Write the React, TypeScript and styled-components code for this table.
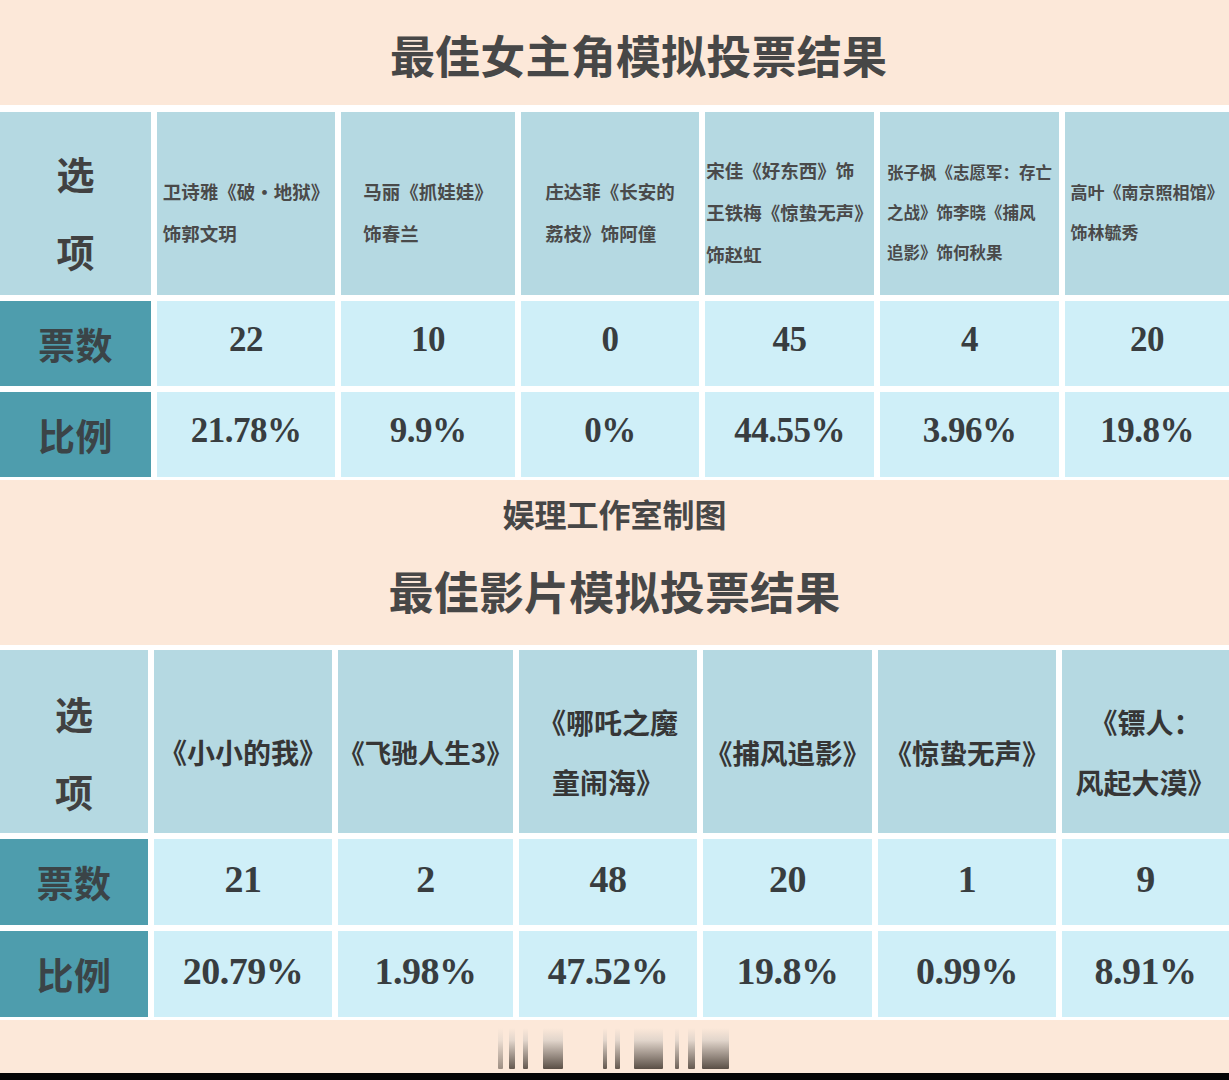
import React from 'react';
import styled, { createGlobalStyle } from 'styled-components';

const GlobalStyle = createGlobalStyle`
  html, body {
    margin: 0;
    padding: 0;
    background: #fce8d9;
  }
  body {
    font-family: "Noto Sans CJK SC", "Noto Sans", sans-serif;
  }
`;

const Page = styled.div`
  width: 1229px;
  height: 1080px;
  overflow: hidden;
  display: flex;
  flex-direction: column;
  background: #fce8d9;
  color: #444;
`;

const Title = styled.h1<{ $top: number; $bottom: number; $shift: number }>`
  margin: 0;
  padding: ${({ $top, $bottom, $shift }) => `${$top}px 0 ${$bottom}px ${$shift}px`};
  height: 90px;
  line-height: 90px;
  font-size: 45px;
  font-weight: 700;
  text-align: center;
  color: #474747;
  letter-spacing: 0.2px;
`;

const Credit = styled.div`
  height: 66px;
  line-height: 66px;
  font-size: 32px;
  font-weight: 700;
  text-align: center;
  color: #474747;
`;

const Table = styled.div<{ $cols: string; $rows: string; $top: number }>`
  display: grid;
  grid-template-columns: ${({ $cols }) => $cols};
  grid-template-rows: ${({ $rows }) => $rows};
  gap: 6px;
  padding: ${({ $top }) => $top}px 0 3px;
  background: #fff;
`;

const HeadCell = styled.div<{ $pad: number }>`
  background: #b5d9e2;
  display: flex;
  align-items: center;
  justify-content: center;
  padding-top: ${({ $pad }) => $pad}px;
  box-sizing: border-box;
  min-width: 0;
`;

const OptionLabel = styled.div`
  font-size: 38px;
  font-weight: 700;
  line-height: 78px;
  color: #414141;
  text-align: center;
`;

const HeadText = styled.div<{ $size: number; $lh: number; $center?: boolean }>`
  font-size: ${({ $size }) => $size}px;
  line-height: ${({ $lh }) => $lh}px;
  font-weight: 700;
  color: ${({ $center }) => ($center ? '#363636' : '#4a4a4a')};
  text-align: ${({ $center }) => ($center ? 'center' : 'left')};
  white-space: nowrap;
`;

const LabelCell = styled.div`
  background: #4e9dad;
  display: flex;
  align-items: center;
  justify-content: center;
  font-size: 37px;
  font-weight: 700;
  color: #3b4447;
  letter-spacing: 0.5px;
`;

const DataCell = styled.div<{ $size: number }>`
  background: #cfeff8;
  display: flex;
  align-items: center;
  justify-content: center;
  padding-bottom: 7px;
  box-sizing: border-box;
  font-family: "Liberation Serif", "Times New Roman", serif;
  font-weight: 700;
  font-size: ${({ $size }) => $size}px;
  letter-spacing: -0.5px;
  color: #383d40;
`;

const Footer = styled.div`
  height: 53px;
  display: flex;
  justify-content: center;
  align-items: flex-start;
  padding-top: 8px;
  box-sizing: border-box;
`;

const BlackStrip = styled.div`
  height: 7px;
  background: #050505;
`;

type Entry = { lines: string[]; size: number; votes: string; pct: string };

const actresses: Entry[] = [
  { lines: ['卫诗雅《破・地狱》', '饰郭文玥'], size: 18.5, votes: '22', pct: '21.78%' },
  { lines: ['马丽《抓娃娃》', '饰春兰'], size: 18.5, votes: '10', pct: '9.9%' },
  { lines: ['庄达菲《长安的', '荔枝》饰阿僮'], size: 18.5, votes: '0', pct: '0%' },
  { lines: ['宋佳《好东西》饰', '王铁梅《惊蛰无声》', '饰赵虹'], size: 18.5, votes: '45', pct: '44.55%' },
  { lines: ['张子枫《志愿军：存亡', '之战》饰李晓《捕风', '追影》饰何秋果'], size: 16.5, votes: '4', pct: '3.96%' },
  { lines: ['高叶《南京照相馆》', '饰林毓秀'], size: 17, votes: '20', pct: '19.8%' },
];

const films: Entry[] = [
  { lines: ['《小小的我》'], size: 28, votes: '21', pct: '20.79%' },
  { lines: ['《飞驰人生3》'], size: 26.5, votes: '2', pct: '1.98%' },
  { lines: ['《哪吒之魔', '童闹海》'], size: 28, votes: '48', pct: '47.52%' },
  { lines: ['《捕风追影》'], size: 27.5, votes: '20', pct: '19.8%' },
  { lines: ['《惊蛰无声》'], size: 27.5, votes: '1', pct: '0.99%' },
  { lines: ['《镖人：', '风起大漠》'], size: 28, votes: '9', pct: '8.91%' },
];

function VoteTable({
  entries,
  cols,
  rows,
  top,
  headPad,
  lineHeight,
  center,
  numSize,
}: {
  entries: Entry[];
  cols: string;
  rows: string;
  top: number;
  headPad: number;
  lineHeight: number;
  center?: boolean;
  numSize: number;
}) {
  return (
    <Table $cols={cols} $rows={rows} $top={top}>
      <HeadCell $pad={headPad}>
        <OptionLabel>
          选<br />项
        </OptionLabel>
      </HeadCell>
      {entries.map((e) => (
        <HeadCell key={e.lines.join()} $pad={headPad}>
          <HeadText $size={e.size} $lh={e.size < 17.5 && !center ? 40 : lineHeight} $center={center}>
            {e.lines.map((l, i) => (
              <div key={i}>{l}</div>
            ))}
          </HeadText>
        </HeadCell>
      ))}
      <LabelCell>票数</LabelCell>
      {entries.map((e, i) => (
        <DataCell key={'v' + i} $size={numSize}>
          {e.votes}
        </DataCell>
      ))}
      <LabelCell>比例</LabelCell>
      {entries.map((e, i) => (
        <DataCell key={'p' + i} $size={numSize}>
          {e.pct}
        </DataCell>
      ))}
    </Table>
  );
}

// blurred watermark strip at the bottom
const bars = [
  { x: 18, w: 5, o: 0.5 },
  { x: 29, w: 6, o: 0.8 },
  { x: 43, w: 5, o: 0.8 },
  { x: 63, w: 20, o: 0.85 },
  { x: 123, w: 4, o: 0.8 },
  { x: 135, w: 5, o: 0.8 },
  { x: 154, w: 29, o: 0.85 },
  { x: 195, w: 4, o: 0.75 },
  { x: 208, w: 7, o: 0.8 },
  { x: 222, w: 27, o: 0.85 },
];

function WatermarkBars() {
  return (
    <svg width="270" height="41" viewBox="0 0 270 41">
      <defs>
        <linearGradient id="barFade" x1="0" y1="0" x2="0" y2="1">
          <stop offset="0" stopColor="#fce8d9" />
          <stop offset="0.3" stopColor="#ddd2c9" />
          <stop offset="1" stopColor="#3e342c" />
        </linearGradient>
      </defs>
      {bars.map((b, i) => (
        <rect key={i} x={b.x} y={0} width={b.w} height={41} fill="url(#barFade)" opacity={b.o} rx={1} />
      ))}
    </svg>
  );
}

export default function App() {
  return (
    <Page>
      <GlobalStyle />
      <Title $top={10} $bottom={5} $shift={48}>
        最佳女主角模拟投票结果
      </Title>
      <VoteTable
        entries={actresses}
        cols="151px 178px 174px 178px 169px 179px 1fr"
        rows="183px 85px 85px"
        top={7}
        headPad={16}
        lineHeight={42}
        numSize={35}
      />
      <Credit>娱理工作室制图</Credit>
      <Title $top={0} $bottom={9} $shift={0}>
        最佳影片模拟投票结果
      </Title>
      <VoteTable
        entries={films}
        cols="148px 178px 175px 178px 169px 178px 1fr"
        rows="183px 86px 86px"
        top={5}
        headPad={20}
        lineHeight={60}
        center
        numSize={38}
      />
      <Footer>
        <WatermarkBars />
      </Footer>
      <BlackStrip />
    </Page>
  );
}
